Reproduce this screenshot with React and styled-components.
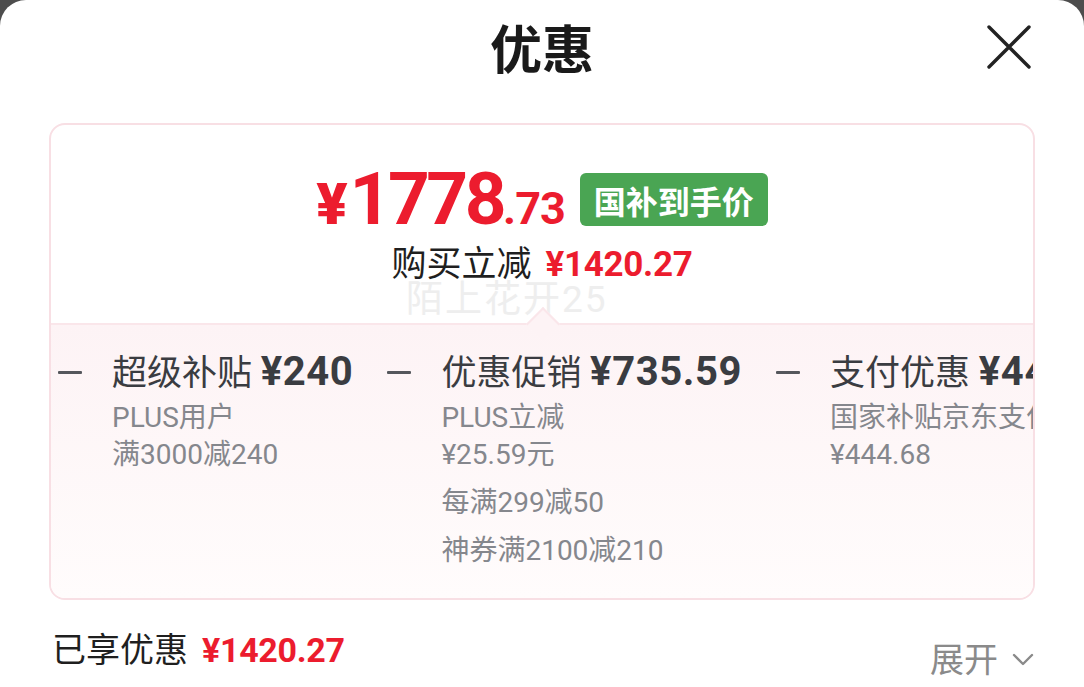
import React from "react";
import styled, { createGlobalStyle } from "styled-components";

const GlobalStyle = createGlobalStyle`
  html, body {
    margin: 0;
    padding: 0;
    background: #4d4d4d;
  }
  body {
    font-family: "Roboto", "Noto Sans CJK SC", sans-serif;
  }
`;

const red = "#ec1c2e";

const discounts = [
  {
    name: "超级补贴",
    amount: "¥240",
    groups: [["PLUS用户", "满3000减240"]],
  },
  {
    name: "优惠促销",
    amount: "¥735.59",
    groups: [["PLUS立减", "¥25.59元"], ["每满299减50"], ["神券满2100减210"]],
  },
  {
    name: "支付优惠",
    amount: "¥444.68",
    groups: [["国家补贴京东支付优惠", "¥444.68"]],
  },
];

export default function App() {
  return (
    <>
      <GlobalStyle />
      <Sheet>
        <Header>
          <Title>优惠</Title>
          <Close aria-label="close">
            <svg width="46" height="46" viewBox="0 0 46 46">
              <path
                d="M3 3 L43 43 M43 3 L3 43"
                stroke="#222"
                strokeWidth="3.4"
                strokeLinecap="round"
              />
            </svg>
          </Close>
        </Header>

        <Card>
          <Summary>
            <PriceRow>
              <Yen>¥</Yen>
              <BigNum>1778</BigNum>
              <Decimal>.73</Decimal>
              <Badge>国补到手价</Badge>
            </PriceRow>
            <SaveLine>
              购买立减<RedAmount>¥1420.27</RedAmount>
            </SaveLine>
            <Watermark>陌上花开25</Watermark>
          </Summary>

          <Details>
            <ItemRow>
              {discounts.map((d) => (
                <Item key={d.name}>
                  <Minus />
                  <ItemBody>
                    <ItemTitle>
                      {d.name} <strong>{d.amount}</strong>
                    </ItemTitle>
                    {d.groups.map((g, i) => (
                      <SubGroup key={i}>
                        {g.map((line) => (
                          <SubLine key={line}>{line}</SubLine>
                        ))}
                      </SubGroup>
                    ))}
                  </ItemBody>
                </Item>
              ))}
            </ItemRow>
          </Details>
        </Card>

        <Footer>
          <Enjoyed>
            已享优惠<RedAmount>¥1420.27</RedAmount>
          </Enjoyed>
          <Expand>
            展开
            <svg width="22" height="14" viewBox="0 0 22 14">
              <path
                d="M2 2 L11 11 L20 2"
                fill="none"
                stroke="#8a8a8a"
                strokeWidth="2.4"
                strokeLinecap="round"
                strokeLinejoin="round"
              />
            </svg>
          </Expand>
        </Footer>
      </Sheet>
    </>
  );
}

const Sheet = styled.div`
  width: 1084px;
  height: 687px;
  background: #fff;
  border-radius: 26px 26px 0 0;
  overflow: hidden;
  display: flex;
  flex-direction: column;
`;

const Header = styled.div`
  position: relative;
  height: 94px;
  display: flex;
  align-items: center;
  justify-content: center;
`;

const Title = styled.h1`
  margin: 0;
  font-family: "Noto Sans CJK SC", sans-serif;
  font-size: 52px;
  font-weight: 700;
  color: #1a1a1a;
  line-height: 1;
`;

const Close = styled.button`
  position: absolute;
  right: 52px;
  top: 24px;
  padding: 0;
  border: 0;
  background: none;
  display: flex;
`;

const Card = styled.div`
  margin: 29px 49px 0;
  height: 477px;
  box-sizing: border-box;
  border: 2px solid #f8dfe4;
  border-radius: 16px;
  overflow: hidden;
  display: flex;
  flex-direction: column;
`;

const Summary = styled.div`
  position: relative;
  height: 198px;
  display: flex;
  flex-direction: column;
  align-items: center;
  padding-top: 38px;
  box-sizing: border-box;
`;

const PriceRow = styled.div`
  display: flex;
  align-items: baseline;
  color: ${red};
  font-family: "Roboto", sans-serif;
  font-weight: 700;
  line-height: 1;
`;

const Yen = styled.span`
  font-size: 58px;
  margin-right: 2px;
  font-weight: 900;
`;

const BigNum = styled.span`
  font-size: 73px;
  letter-spacing: -3.5px;
`;

const Decimal = styled.span`
  font-size: 45px;
  letter-spacing: -1px;
`;

const Badge = styled.span`
  align-self: center;
  margin-left: 15px;
  height: 53px;
  padding: 0 14px;
  display: flex;
  align-items: center;
  background: #4aa553;
  border-radius: 6px;
  color: #fff;
  font-family: "Noto Sans CJK SC", sans-serif;
  font-size: 32px;
  font-weight: 700;
`;

const SaveLine = styled.div`
  margin-top: 6px;
  font-size: 35px;
  color: #1f1f1f;
  line-height: 38px;
  font-family: "Noto Sans CJK SC", sans-serif;
`;

const RedAmount = styled.span`
  margin-left: 14px;
  font-family: "Roboto", sans-serif;
  font-weight: 700;
  color: ${red};
  letter-spacing: -0.3px;
`;

const Watermark = styled.div`
  position: absolute;
  top: 156px;
  left: 355px;
  font-size: 37px;
  color: #eeeeee;
  line-height: 1;
  letter-spacing: 2px;
`;

const Details = styled.div`
  position: relative;
  flex: 1;
  border-top: 2px solid #fae6ea;
  background: linear-gradient(#fdf3f5, #fffcfc);
  padding: 25px 0 0 7px;

  &::before {
    content: "";
    position: absolute;
    top: -13px;
    left: 50%;
    width: 22px;
    height: 22px;
    margin-left: -11px;
    background: #fdf3f5;
    border-top: 2px solid #fae6ea;
    border-left: 2px solid #fae6ea;
    transform: rotate(45deg);
  }
`;

const ItemRow = styled.div`
  display: flex;
  gap: 34px;
  white-space: nowrap;
`;

const Item = styled.div`
  display: flex;
  align-items: flex-start;
  gap: 30px;
  flex-shrink: 0;
`;

const Minus = styled.span`
  width: 24px;
  height: 3px;
  margin-top: 21px;
  background: #55575c;
  border-radius: 1px;
`;

const ItemBody = styled.div`
  display: flex;
  flex-direction: column;
  gap: 11px;
`;

const ItemTitle = styled.div`
  font-size: 35px;
  line-height: 44px;
  color: #3a3c41;
  margin-bottom: -8px;

  strong {
    font-family: "Roboto", sans-serif;
    font-size: 40px;
    font-weight: 700;
    letter-spacing: 0.6px;
  }
`;

const SubGroup = styled.div`
  display: flex;
  flex-direction: column;
`;

const SubLine = styled.div`
  font-size: 28px;
  line-height: 37px;
  color: #85878d;
`;

const Footer = styled.div`
  flex: 1;
  display: flex;
  justify-content: space-between;
  align-items: flex-start;
  padding: 24px 50px 0 52px;
`;

const Enjoyed = styled.div`
  font-family: "Noto Sans CJK SC", sans-serif;
  font-size: 34px;
  line-height: 48px;
  color: #1f1f1f;
`;

const Expand = styled.div`
  margin-top: 10px;
  display: flex;
  align-items: center;
  gap: 14px;
  font-family: "Noto Sans CJK SC", sans-serif;
  font-size: 34px;
  line-height: 48px;
  color: #8a8a8a;

  svg {
    margin-top: 4px;
  }
`;
